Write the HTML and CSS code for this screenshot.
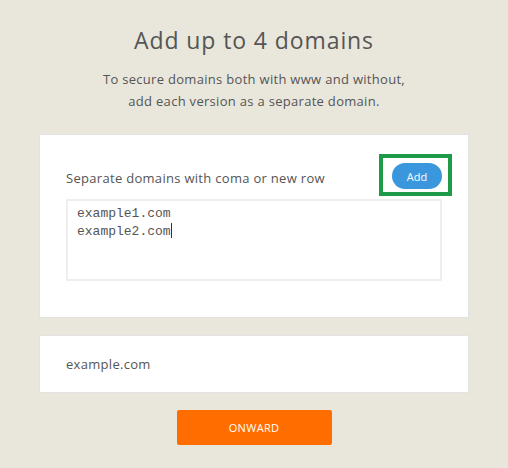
FILE: index.html
```html
<!DOCTYPE html>
<html lang="en">
    <head>
        <meta charset="utf-8"/>
        <title>Add domains</title>
        <link rel="stylesheet" href="styles.css">
    </head>
    <body>
        <div class="page">
            <h1>Add up to 4 domains</h1>
            <p class="intro">To secure domains both with www and without,<br>add each version as a separate domain.</p>

            <div class="card">
                <div class="row">
                    <label for="domains">Separate domains with coma or new row</label>
                    <button class="add">Add</button>
                </div>
                <div id="domains" class="area">example1.com<br>example2.com<span class="caret"></span></div>
            </div>

            <div class="card list">
                <span>example.com</span>
            </div>

            <button class="onward">ONWARD</button>
        </div>
    </body>
</html>
```

FILE: styles.css
```css
*{margin:0;padding:0;box-sizing:border-box;}

body{
    background: #e9e7dc;
    font-family: "Open Sans", "Liberation Sans", sans-serif;
    color: #555;
}

.page{
    display: flex;
    flex-direction: column;
    align-items: center;
    width: 430px;
    margin: 0 auto;
    padding-top: 24px;
}

h1{
    font-size: 23px;
    font-weight: 400;
    letter-spacing: 0.9px;
    line-height: 32px;
}

.intro{
    margin-top: 12px;
    font-size: 13px;
    line-height: 22px;
    text-align: center;
    letter-spacing: 0.3px;
}

.card{
    width: 100%;
    background: white;
    border: 1px solid #e2e2e2;
}

.card:first-of-type{
    margin-top: 22px;
    padding: 28px 26px 36px 26px;
}

.row{
    display: flex;
    justify-content: space-between;
    align-items: center;
}

label{
    font-size: 13px;
    letter-spacing: 0.3px;
    padding-top: 3px;
}

.add{
    position: relative;
    width: 50px;
    height: 26px;
    border: none;
    border-radius: 13px;
    background: #3a97de;
    color: white;
    font-family: inherit;
    font-size: 11px;
}

/* highlight frame round the button */
.add::after{
    content: "";
    position: absolute;
    left: -13px;
    right: -10px;
    top: -9px;
    bottom: -7px;
    border: 4px solid #1f9a48;
}

.area{
    height: 82px;
    margin-top: 10px;
    padding: 4px 9px;
    border: 2px solid #eeeeee;
    font-family: "Liberation Mono", monospace;
    font-size: 13px;
    line-height: 18px;
    color: #555;
}

.caret{
    display: inline-block;
    width: 1px;
    height: 15px;
    background: #333;
    vertical-align: -3px;
}

.list{
    display: flex;
    align-items: center;
    height: 58px;
    margin-top: 17px;
    padding: 0 26px;
    font-size: 13px;
    letter-spacing: 0.3px;
}

.onward{
    width: 155px;
    height: 35px;
    margin-top: 17px;
    border: none;
    border-radius: 2px;
    background: #ff6d00;
    color: white;
    font-family: inherit;
    font-size: 11px;
    letter-spacing: 0.3px;
}
```
